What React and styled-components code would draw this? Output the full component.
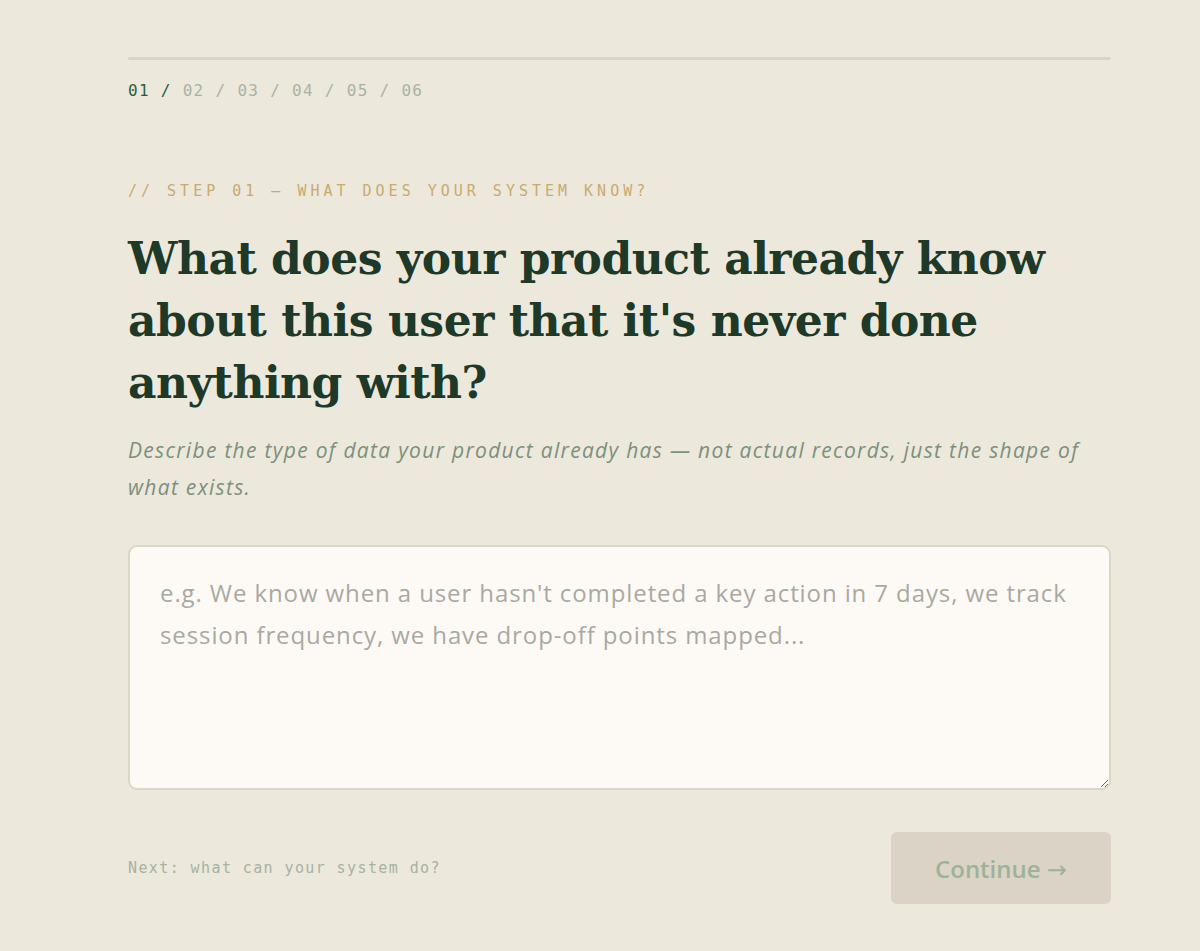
import styled, { createGlobalStyle } from 'styled-components';

const GlobalStyle = createGlobalStyle`
    html, body {
        margin: 0;
        padding: 0;
        background: #ece8dc;
    }
    * { box-sizing: border-box; }
`;

const Page = styled.div`
    min-height: 951px;
    padding: 57px 89px 40px 128px;
`;

const Progress = styled.div`
    height: 3px;
    background: #d8d4c6;
    border-radius: 2px;
`;

const Steps = styled.div`
    margin-top: 21px;
    font-family: "DejaVu Sans Mono", monospace;
    font-size: 16px;
    letter-spacing: 1.3px;
    color: #a9b3a3;
`;

const Step = styled.span`
    color: ${(p) => (p.$active ? '#2d5d40' : '#a9b3a3')};
`;

const Eyebrow = styled.div`
    margin-top: 82px;
    font-family: "DejaVu Sans Mono", monospace;
    font-size: 15px;
    letter-spacing: 4px;
    color: #c8ab6e;
`;

const Title = styled.h1`
    margin: 28px 0 0;
    font-family: "DejaVu Serif", serif;
    font-weight: 700;
    font-size: 44px;
    line-height: 62px;
    letter-spacing: -0.5px;
    color: #1e3928;
    max-width: 960px;
`;

const Lead = styled.p`
    margin: 18px 0 0;
    font-family: "Open Sans", sans-serif;
    font-style: italic;
    font-size: 21px;
    line-height: 37px;
    letter-spacing: 1.3px;
    color: #7d907d;
`;

const Field = styled.textarea`
    display: block;
    width: 100%;
    height: 245px;
    margin-top: 39px;
    padding: 25px 30px;
    border: 2px solid #dcd6c8;
    border-radius: 9px;
    background: #fdfaf6;
    font-family: "Open Sans", sans-serif;
    font-size: 24px;
    line-height: 42px;
    letter-spacing: 0.9px;
    color: #333;
    resize: vertical;
    outline: none;

    &::placeholder {
        color: #a9a9a2;
    }
`;

const Footer = styled.div`
    display: flex;
    align-items: center;
    justify-content: space-between;
    margin-top: 42px;
`;

const NextHint = styled.span`
    font-family: "DejaVu Sans Mono", monospace;
    font-size: 15px;
    letter-spacing: 1.4px;
    color: #a7b2a2;
`;

const ContinueButton = styled.button`
    width: 220px;
    height: 72px;
    border: none;
    border-radius: 6px;
    background: #dbd3c5;
    font-family: "Open Sans", sans-serif;
    font-size: 24px;
    font-weight: 600;
    color: #9db29b;
    cursor: not-allowed;
`;

const Arrow = styled.span`
    font-family: "DejaVu Sans", sans-serif;
    font-weight: 400;
`;

const steps = ['01', '02', '03', '04', '05', '06'];

const App = () => {
    return (
        <>
            <GlobalStyle />
            <Page>
                <Progress />
                <Steps>
                    {steps.map((s, i) => (
                        <span key={s}>
                            <Step $active={i === 0}>{s}</Step>
                            {i < steps.length - 1 && <Step $active={i === 0}> / </Step>}
                        </span>
                    ))}
                </Steps>
                <Eyebrow>// STEP 01 — WHAT DOES YOUR SYSTEM KNOW?</Eyebrow>
                <Title>What does your product already know about this user that it's never done anything with?</Title>
                <Lead>Describe the type of data your product already has — not actual records, just the shape of what exists.</Lead>
                <Field placeholder="e.g. We know when a user hasn't completed a key action in 7 days, we track session frequency, we have drop-off points mapped..." />
                <Footer>
                    <NextHint>Next: what can your system do?</NextHint>
                    <ContinueButton disabled>Continue <Arrow>→</Arrow></ContinueButton>
                </Footer>
            </Page>
        </>
    );
};

export default App;
